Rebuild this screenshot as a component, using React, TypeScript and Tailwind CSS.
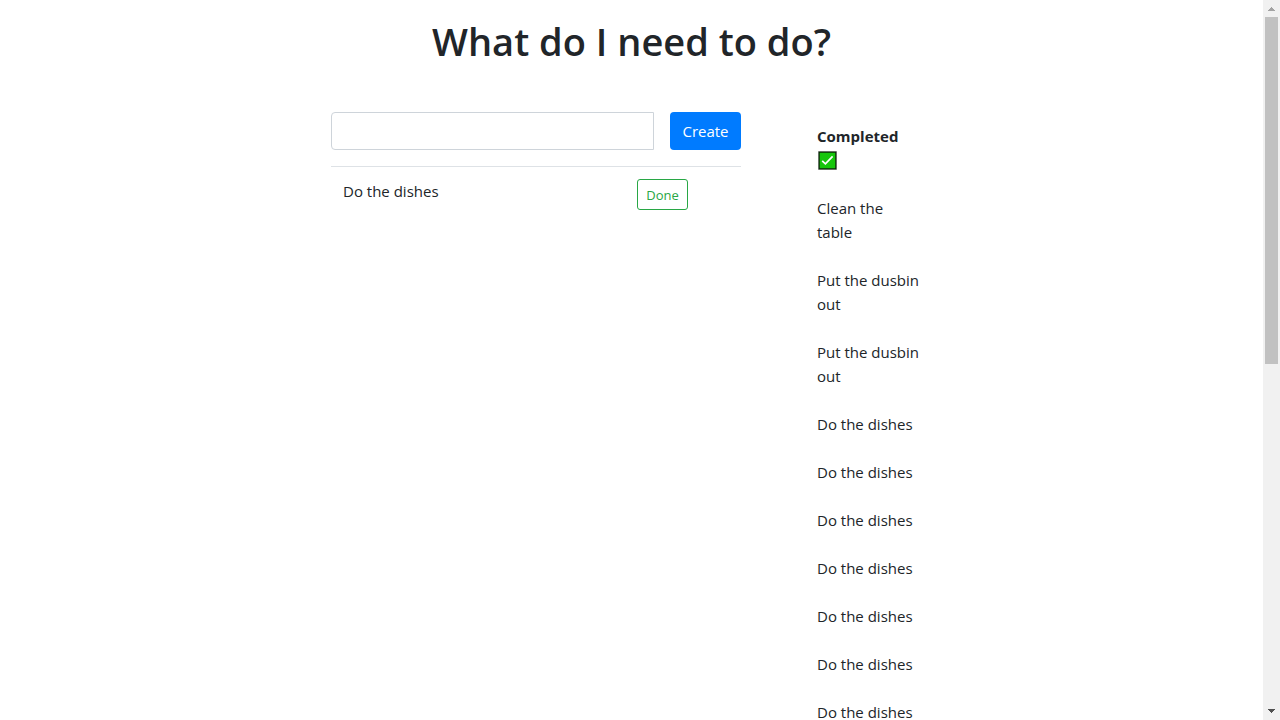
import { useState } from "react";
import type { FormEvent } from "react";

const INITIAL_COMPLETED = [
  "Clean the table",
  "Put the dusbin out",
  "Put the dusbin out",
  "Do the dishes",
  "Do the dishes",
  "Do the dishes",
  "Do the dishes",
  "Do the dishes",
  "Do the dishes",
  "Do the dishes",
];

function CheckMark() {
  return (
    <svg viewBox="0 0 19 19" className="ml-px h-[19px] w-[19px]" role="img" aria-label="Completed">
      <rect x="0.2" y="0.2" width="18.6" height="18.6" fill="#5f6a5f" />
      <rect x="0.8" y="0.8" width="17.4" height="17.4" fill="#0c1c0a" />
      <rect x="1.7" y="1.7" width="15.6" height="15.6" fill="#16c60c" />
      <path d="M4.2 9.8 7.4 12.8 14.6 5.4" fill="none" stroke="#ffffff" strokeWidth="1.7" />
    </svg>
  );
}

function ScrollTrack() {
  return (
    <div aria-hidden="true" className="flex w-[17px] shrink-0 flex-col bg-[#f1f1f1]">
      <div className="flex h-[17px] shrink-0 items-center justify-center">
        <svg viewBox="0 0 7 4" className="h-1 w-[7px]" shapeRendering="crispEdges">
          <path d="M3 0h1v1h1v1h1v1h1v1H0V3h1V2h1V1h1z" fill="#a3a3a3" />
        </svg>
      </div>
      <div className="flex min-h-0 flex-1 flex-col px-0.5">
        <div className="h-[50.6%] w-[13px] bg-[#c1c1c1]" />
      </div>
      <div className="flex h-[17px] shrink-0 items-start justify-center pt-1.5">
        <svg viewBox="0 0 7 4" className="h-1 w-[7px]" shapeRendering="crispEdges">
          <path d="M0 0h7v1H6v1H5v1H4v1H3V3H2V2H1V1H0z" fill="#505050" />
        </svg>
      </div>
    </div>
  );
}

export default function App() {
  const [draft, setDraft] = useState("");
  const [tasks, setTasks] = useState(["Do the dishes"]);
  const [completed, setCompleted] = useState(INITIAL_COMPLETED);

  function create(event: FormEvent) {
    event.preventDefault();
    if (!draft.trim()) return;
    setTasks([...tasks, draft.trim()]);
    setDraft("");
  }

  function finish(index: number) {
    setCompleted([...completed, tasks[index]]);
    setTasks(tasks.filter((_, i) => i !== index));
  }

  return (
    <div className="flex h-screen bg-white font-['Segoe_UI','Open_Sans',sans-serif] text-[15px] leading-6 text-[#212529]">
      <main className="min-w-0 flex-1 overflow-y-auto [scrollbar-width:none]">
        <h1 className="pt-4 text-center text-[38px] leading-[50px] font-semibold">What do I need to do?</h1>
        <div className="mx-auto mt-[46px] flex w-full max-w-[601px] items-start justify-between">
          <section className="w-[410px]">
            <form onSubmit={create} className="flex gap-4">
              <input
                type="text"
                aria-label="New task"
                value={draft}
                onChange={(event) => setDraft(event.target.value)}
                className="h-[38px] min-w-0 flex-1 rounded-l border border-[#ced4da] px-3 outline-none"
              />
              <button type="submit" className="h-[38px] w-[71px] rounded bg-[#007bff] text-white">
                Create
              </button>
            </form>
            <table className="mt-4 w-full border-t border-[#dee2e6]">
              <tbody>
                {tasks.map((task, index) => (
                  <tr key={index}>
                    <td className="p-3 align-top">{task}</td>
                    <td className="w-[116px] p-3 align-top">
                      <button
                        type="button"
                        onClick={() => finish(index)}
                        className="block h-[31px] w-[51px] rounded-[3px] border border-[#28a745] text-[13px] leading-5 text-[#28a745]"
                      >
                        Done
                      </button>
                    </td>
                  </tr>
                ))}
              </tbody>
            </table>
          </section>
          <section className="w-[115px] pt-3">
            <h2 className="font-bold">Completed</h2>
            <div className="flex h-6 items-center">
              <CheckMark />
            </div>
            <ul className="flex flex-col gap-6 py-6">
              {completed.map((task, index) => (
                <li key={index} className="pr-3">
                  {task}
                </li>
              ))}
            </ul>
          </section>
        </div>
      </main>
      <ScrollTrack />
    </div>
  );
}
